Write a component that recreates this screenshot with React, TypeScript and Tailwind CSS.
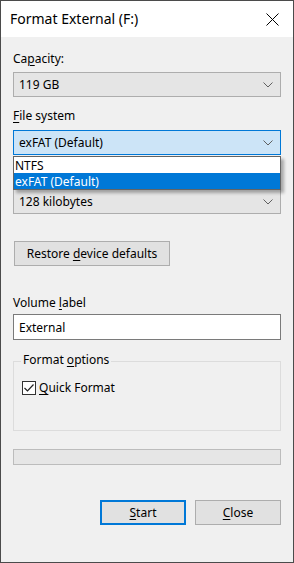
import React from 'react';

// small chevron used by the combo boxes
function Chevron() {
  return (
    <svg width="10" height="6" viewBox="0 0 10 6" className="shrink-0">
      <path d="M0.5 0.5 L5 5 L9.5 0.5" fill="none" stroke="#606060" strokeWidth="1" />
    </svg>
  );
}

function U({ children }: { children: React.ReactNode }) {
  return <span className="underline underline-offset-2 decoration-1">{children}</span>;
}

function Combo({ value, active }: { value: string; active?: boolean }) {
  return (
    <div
      className={
        active
          ? 'h-[25px] w-full flex items-center justify-between pl-[5px] pr-[7px] border border-[#0078d7] bg-[#cce4f7]'
          : 'h-[25px] w-full flex items-center justify-between pl-[5px] pr-[7px] border border-[#adadad] bg-[#e5e5e5]'
      }
    >
      <span className="leading-[15px]">{value}</span>
      <Chevron />
    </div>
  );
}

export default function App() {
  return (
    <div className="w-[294px] h-[563px] bg-[#f0f0f0] border border-[#4b4b4b] flex flex-col text-[12px] text-black font-['Noto_Sans',sans-serif] overflow-hidden">
      {/* title bar */}
      <div className="h-[36px] shrink-0 bg-white flex items-center justify-between pl-[9px] pr-[14px]">
        <span className="text-[14px] leading-[20px]">Format External (F:)</span>
        <svg width="13" height="13" viewBox="0 0 13 13">
          <path d="M0.5 0.5 L12.5 12.5 M12.5 0.5 L0.5 12.5" stroke="#000" strokeWidth="1" />
        </svg>
      </div>

      <div className="flex flex-col px-[12px] pt-[14px] leading-[15px]">
        <div>
          Ca<U>p</U>acity:
        </div>
        <div className="mt-[6px]">
          <Combo value="119 GB" />
        </div>

        <div className="mt-[11px]">
          <U>F</U>ile system
        </div>
        <div className="mt-[7px] relative">
          <Combo value="exFAT (Default)" active />
          {/* open drop-down list, covers the allocation label */}
          <div className="absolute left-0 top-[26px] w-full z-10 bg-white border border-[#646464] shadow-[3px_3px_3px_rgba(0,0,0,0.3)]">
            <div className="h-[16px] pl-[1px] flex items-center">NTFS</div>
            <div className="h-[16px] pl-[1px] flex items-center bg-[#0078d7] text-white">exFAT (Default)</div>
          </div>
        </div>

        {/* space of the hidden allocation unit size label */}
        <div className="mt-[11px] h-[15px]" />
        <div className="mt-[8px]">
          <Combo value="128 kilobytes" />
        </div>

        <button className="mt-[27px] ml-[1px] w-[156px] h-[25px] bg-[#e1e1e1] border border-[#adadad] text-center">
          Restore <U>d</U>evice defaults
        </button>

        <div className="mt-[29px]">
          Volume <U>l</U>abel
        </div>
        <div className="mt-[4px] h-[26px] bg-white border border-[#7a7a7a] flex items-center pl-[5px]">
          External
        </div>

        {/* Format options group */}
        <div className="mt-[21px] h-[70px] border border-[#dcdcdc] flex flex-col">
          <div className="-mt-[10px] ml-[7px] w-fit px-[2px] bg-[#f0f0f0]">
            Format <U>o</U>ptions
          </div>
          <div className="mt-[13px] ml-[8px] flex items-center gap-[3px]">
            <div className="w-[14px] h-[14px] border border-[#333] bg-white flex items-center justify-center">
              <svg width="10" height="8" viewBox="0 0 10 8">
                <path d="M0.5 4 L3.5 7 L9.5 0.5" fill="none" stroke="#222" strokeWidth="1.2" />
              </svg>
            </div>
            <span>
              <U>Q</U>uick Format
            </span>
          </div>
        </div>

        {/* progress bar */}
        <div className="mt-[18px] h-[16px] bg-[#e6e6e6] border border-[#bcbcbc]" />

        <div className="mt-[35px] flex justify-end gap-[9px]">
          <button className="w-[86px] h-[25px] bg-[#e1e1e1] border-2 border-[#0078d7]">
            <U>S</U>tart
          </button>
          <button className="w-[86px] h-[25px] bg-[#e1e1e1] border border-[#adadad]">
            <U>C</U>lose
          </button>
        </div>
      </div>
    </div>
  );
}
